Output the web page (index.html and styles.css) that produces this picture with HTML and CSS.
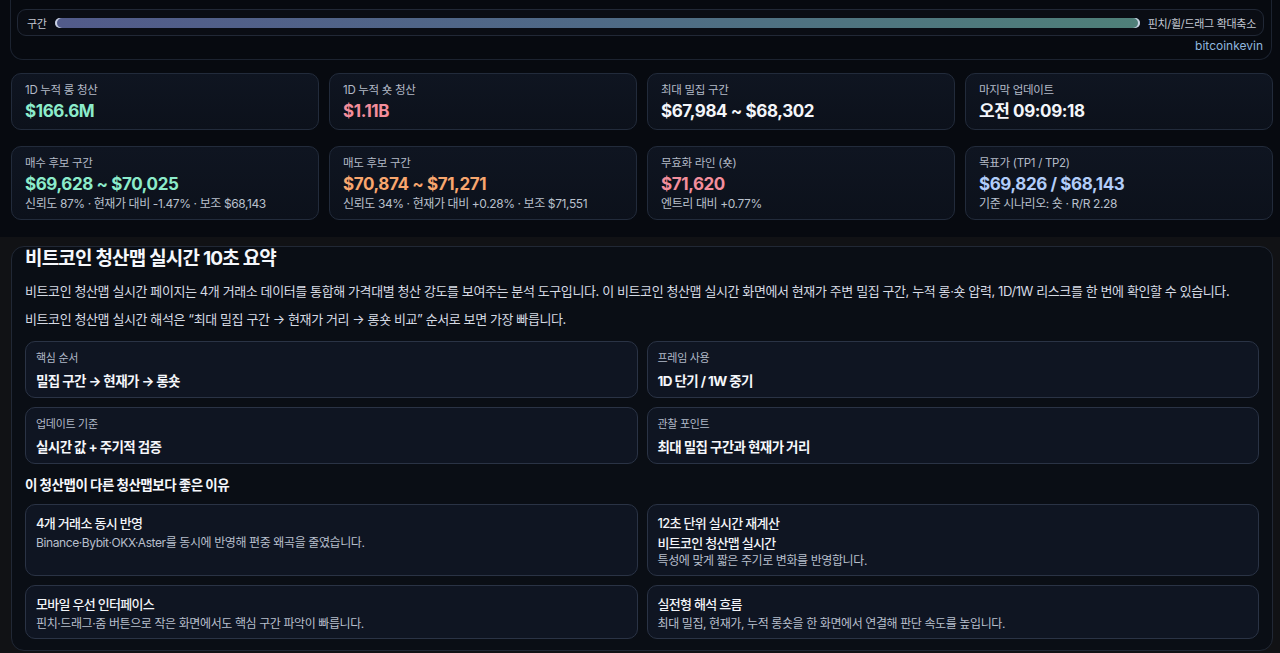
FILE: index.html
```html
<!DOCTYPE html>
<html lang="ko">
<head>
<meta charset="utf-8">
<title>비트코인 청산맵 실시간</title>
<link rel="stylesheet" href="styles.css">
</head>
<body>
<div class="app">
  <section class="chart-panel">
    <div class="range-row">
      <span class="range-label">구간</span>
      <div class="range-track"><div class="range-window"></div></div>
      <span class="range-hint">핀치/휠/드래그 확대축소</span>
    </div>
    <div class="credit">bitcoinkevin</div>
  </section>

  <div class="stats">
    <div class="stat">
      <div class="stat-label">1D 누적 롱 청산</div>
      <div class="stat-value mint">$166.6M</div>
    </div>
    <div class="stat">
      <div class="stat-label">1D 누적 숏 청산</div>
      <div class="stat-value pink">$1.11B</div>
    </div>
    <div class="stat">
      <div class="stat-label">최대 밀집 구간</div>
      <div class="stat-value">$67,984 ~ $68,302</div>
    </div>
    <div class="stat">
      <div class="stat-label">마지막 업데이트</div>
      <div class="stat-value">오전 09:09:18</div>
    </div>
    <div class="stat">
      <div class="stat-label">매수 후보 구간</div>
      <div class="stat-value mint">$69,628 ~ $70,025</div>
      <div class="stat-sub">신뢰도 87% · 현재가 대비 -1.47% · 보조 $68,143</div>
    </div>
    <div class="stat">
      <div class="stat-label">매도 후보 구간</div>
      <div class="stat-value orange">$70,874 ~ $71,271</div>
      <div class="stat-sub">신뢰도 34% · 현재가 대비 +0.28% · 보조 $71,551</div>
    </div>
    <div class="stat">
      <div class="stat-label">무효화 라인 (숏)</div>
      <div class="stat-value pink">$71,620</div>
      <div class="stat-sub">엔트리 대비 +0.77%</div>
    </div>
    <div class="stat">
      <div class="stat-label">목표가 (TP1 / TP2)</div>
      <div class="stat-value blue">$69,826 / $68,143</div>
      <div class="stat-sub">기준 시나리오: 숏 · R/R 2.28</div>
    </div>
  </div>
</div>

<div class="page">
  <section class="summary">
    <h1 class="summary-title">비트코인 청산맵 실시간 10초 요약</h1>
    <p class="summary-text">비트코인 청산맵 실시간 페이지는 4개 거래소 데이터를 통합해 가격대별 청산 강도를 보여주는 분석 도구입니다. 이 비트코인 청산맵 실시간 화면에서 현재가 주변 밀집 구간, 누적 롱·숏 압력, 1D/1W 리스크를 한 번에 확인할 수 있습니다.</p>
    <p class="summary-text">비트코인 청산맵 실시간 해석은 “최대 밀집 구간 → 현재가 거리 → 롱숏 비교” 순서로 보면 가장 빠릅니다.</p>

    <div class="facts">
      <div class="fact">
        <div class="fact-label">핵심 순서</div>
        <div class="fact-value">밀집 구간 → 현재가 → 롱숏</div>
      </div>
      <div class="fact">
        <div class="fact-label">프레임 사용</div>
        <div class="fact-value">1D 단기 / 1W 중기</div>
      </div>
      <div class="fact">
        <div class="fact-label">업데이트 기준</div>
        <div class="fact-value">실시간 값 + 주기적 검증</div>
      </div>
      <div class="fact">
        <div class="fact-label">관찰 포인트</div>
        <div class="fact-value">최대 밀집 구간과 현재가 거리</div>
      </div>
    </div>

    <h2 class="summary-sub">이 청산맵이 다른 청산맵보다 좋은 이유</h2>

    <div class="reasons">
      <div class="reason">
        <div class="reason-title">4개 거래소 동시 반영</div>
        <div class="reason-desc">Binance·Bybit·OKX·Aster를 동시에 반영해 편중 왜곡을 줄였습니다.</div>
      </div>
      <div class="reason">
        <div class="reason-title">12초 단위 실시간 재계산</div>
        <div class="reason-desc"><strong class="reason-strong">비트코인 청산맵 실시간</strong> 특성에 맞게 짧은 주기로 변화를 반영합니다.</div>
      </div>
      <div class="reason">
        <div class="reason-title">모바일 우선 인터페이스</div>
        <div class="reason-desc">핀치·드래그·줌 버튼으로 작은 화면에서도 핵심 구간 파악이 빠릅니다.</div>
      </div>
      <div class="reason">
        <div class="reason-title">실전형 해석 흐름</div>
        <div class="reason-desc">최대 밀집, 현재가, 누적 롱숏을 한 화면에서 연결해 판단 속도를 높입니다.</div>
      </div>
    </div>
  </section>
</div>
</body>
</html>
```

FILE: styles.css
```css
* { box-sizing: border-box; }

html, body {
  margin: 0;
  padding: 0;
  background: #111215;
  color: #e6e9ef;
  font-family: "Inter", "Noto Sans CJK KR", "Noto Sans", sans-serif;
}

/* ---------- top app area ---------- */
.app {
  background: #070a10;
  padding: 0 7px 17px 11px;
}

.chart-panel {
  margin: 0 1px 0 -1px;
  padding: 9px 7px 5px 6px;
  border: 1px solid #1c2330;
  border-top: 0;
  border-radius: 0 0 13px 13px;
  background: #070a10;
}

.range-row {
  display: flex;
  align-items: center;
  gap: 8px;
  height: 27px;
  padding: 0 7px 0 9px;
  border: 1px solid #212836;
  border-radius: 9px;
  background: #0a0d14;
}

.range-label,
.range-hint {
  font-size: 11px;
  color: #c3c8d2;
  letter-spacing: -0.3px;
  white-space: nowrap;
}

.range-track {
  flex: 1;
  height: 10px;
  border-radius: 5px;
  background: #161b26;
}

.range-window {
  height: 100%;
  border-radius: 5px;
  background: linear-gradient(90deg, #525b8a 0%, #4f6a86 50%, #4f8079 100%);
  box-shadow: inset 2px 0 0 #c9d1e2, inset -2px 0 0 #c9d1e2;
}

.credit {
  margin-top: 2px;
  text-align: right;
  font-size: 12px;
  line-height: 16px;
  color: #8fb6df;
  padding-right: 1px;
}

/* ---------- stat cards ---------- */
.stats {
  margin-top: 13px;
  display: grid;
  grid-template-columns: repeat(4, 1fr);
  column-gap: 10px;
  row-gap: 16px;
}

.stat {
  padding: 9px 12px 7px 13px;
  border: 1px solid #222b3b;
  border-radius: 10px;
  background: linear-gradient(180deg, #0f1521 0%, #0c111b 100%);
}

.stat-label {
  font-size: 11.5px;
  line-height: 15px;
  color: #b3bac7;
  letter-spacing: -0.3px;
}

.stat-value {
  margin-top: 2px;
  font-size: 17px;
  line-height: 22px;
  font-weight: 700;
  color: #f4f6fa;
  letter-spacing: -0.4px;
}

.stat-value.mint { color: #8ceccb; }
.stat-value.pink { color: #f38e9c; }
.stat-value.orange { color: #f8a66e; }
.stat-value.blue { color: #b2cdf9; }

.stat-sub {
  font-size: 12px;
  line-height: 17px;
  color: #b9c0cc;
  letter-spacing: -0.4px;
}

/* ---------- summary ---------- */
.page {
  padding: 9px 7px 3px 11px;
}

.summary {
  padding: 0 13px 11px 13px;
  border: 1px solid #212835;
  border-radius: 13px;
  background: #0a0e15;
}

.summary-title {
  margin: 0;
  font-size: 19px;
  line-height: 24px;
  font-weight: 700;
  color: #f5f7fb;
  letter-spacing: -0.8px;
}

.summary-text {
  margin: 10px 0 0;
  font-size: 13px;
  line-height: 20px;
  color: #d6dbe4;
  letter-spacing: -0.4px;
}

.summary-text + .summary-text { margin-top: 8px; }

.facts,
.reasons {
  display: grid;
  grid-template-columns: 1fr 1fr;
  gap: 9px;
}

.facts { margin-top: 12px; }

.fact {
  padding: 9px 10px 6px;
  border: 1px solid #2a3345;
  border-radius: 10px;
  background: #0f1522;
}

.fact-label {
  font-size: 11px;
  line-height: 15px;
  color: #b1b9c8;
  letter-spacing: -0.3px;
}

.fact-value {
  margin-top: 5px;
  font-size: 13.5px;
  line-height: 20px;
  font-weight: 700;
  color: #f5f7fb;
  letter-spacing: -0.6px;
}

.summary-sub {
  margin: 11px 0 9px;
  font-size: 13.5px;
  line-height: 20px;
  font-weight: 700;
  color: #f5f7fb;
  letter-spacing: -0.5px;
}

.reason {
  padding: 9px 10px 5px;
  border: 1px solid #2a3345;
  border-radius: 10px;
  background: #0f1522;
}

.reason-title {
  font-size: 13px;
  line-height: 18px;
  font-weight: 500;
  color: #f2f4f8;
  letter-spacing: -0.7px;
}

.reason-desc {
  margin-top: 2px;
  font-size: 12px;
  line-height: 18px;
  color: #b7bfcc;
  letter-spacing: -0.4px;
}

.reason-strong {
  display: block;
  font-size: 13px;
  font-weight: 500;
  color: #f2f4f8;
  letter-spacing: -0.7px;
}
```
